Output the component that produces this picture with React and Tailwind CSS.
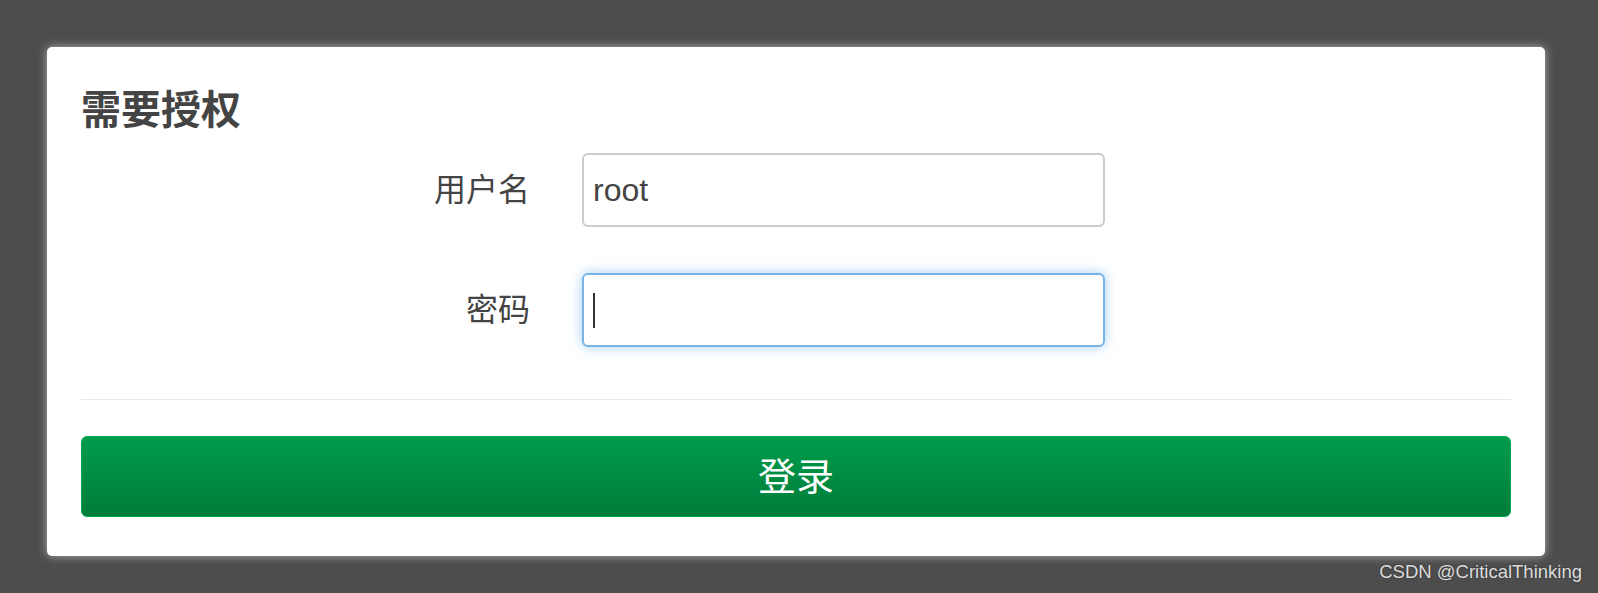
import { useState } from 'react';

const font = { fontFamily: '"Liberation Sans", "Noto Sans CJK SC", sans-serif' };

const FormRow = ({ label, children }) => (
  <div className="flex items-center">
    <label className="w-[449px] text-right text-[32px] leading-[40px] text-[#444]">{label}</label>
    <div className="ml-[52px] w-[523px]">{children}</div>
  </div>
);

const App = () => {
  const [username, setUsername] = useState('root');
  const [password, setPassword] = useState('');

  return (
    <div className="relative h-[593px] w-full overflow-hidden bg-[#4d4d4d]" style={font}>
      <div className="ml-[47px] mt-[47px] w-[1498px] rounded-[5px] bg-white shadow-[0_0_10px_rgba(255,255,255,0.55)] px-[34px] pt-[43px] pb-[39px] flex flex-col">
        <h3 className="text-[40px] leading-[40px] font-bold text-[#444] mb-[23px]">需要授权</h3>

        <div className="flex flex-col gap-[46px]">
          <FormRow label="用户名">
            <input
              value={username}
              onChange={(e) => setUsername(e.target.value)}
              className="w-full h-[74px] rounded-[6px] border-2 border-[#cccccc] bg-white pl-[9px] text-[32px] text-[#444] outline-none"
            />
          </FormRow>

          <FormRow label="密码">
            <div className="relative">
              <input
                type="password"
                value={password}
                onChange={(e) => setPassword(e.target.value)}
                className="w-full h-[74px] rounded-[6px] border-2 border-[#78b4e6] bg-white pl-[9px] text-[32px] text-[#444] outline-none caret-transparent shadow-[0_0_12px_rgba(102,175,233,0.6)]"
              />
              {/* caret of the focused field */}
              <span className="absolute left-[11px] top-[20px] h-[35px] w-[2px] bg-[#333]" />
            </div>
          </FormRow>
        </div>

        <div className="mt-[52px] h-px shrink-0 bg-[#e8e8e8]" />

        <button className="mt-[36px] h-[81px] shrink-0 w-full rounded-[6px] border border-[#00a552] bg-gradient-to-b from-[#009c4b] to-[#007d3a] text-[38px] leading-none text-white">
          登录
        </button>
      </div>

      <div className="absolute right-[16px] bottom-[10px] text-[18.5px] leading-[22px] text-[#dcdcdc] [text-shadow:0_0_2px_rgba(0,0,0,0.4)]">
        CSDN @CriticalThinking
      </div>
    </div>
  );
};

export default App;
